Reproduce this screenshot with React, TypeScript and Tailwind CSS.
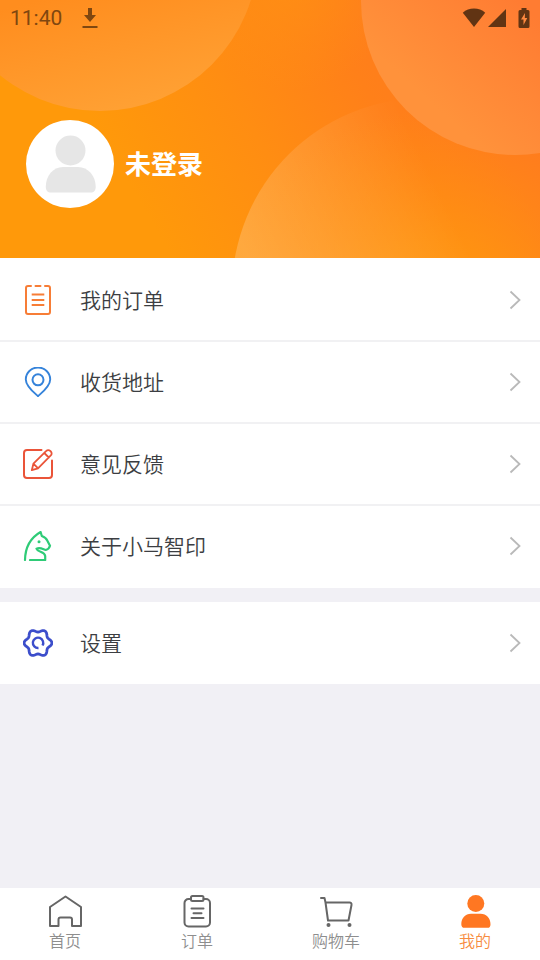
import type { ReactNode } from "react";

const FONT = "font-['Noto_Sans_CJK_SC',sans-serif]";

// Six-lobed outline of the settings gear, centred in a 30x30 box
const GEAR_POINTS = Array.from({ length: 72 }, (_, i) => {
  const angle = (i * 5 * Math.PI) / 180;
  const radius = 12.4 + 1.5 * Math.cos(6 * angle);
  return `${(15 + radius * Math.cos(angle)).toFixed(2)},${(
    15 +
    radius * Math.sin(angle)
  ).toFixed(2)}`;
}).join(" ");

const MenuIcon = ({ color, children }: { color: string; children: ReactNode }) => (
  <svg
    viewBox="0 0 30 30"
    className="size-[30px] shrink-0"
    fill="none"
    stroke={color}
    strokeWidth="2.2"
    strokeLinecap="round"
    strokeLinejoin="round"
    aria-hidden="true"
  >
    {children}
  </svg>
);

const OrderIcon = () => (
  <MenuIcon color="#f77d36">
    <path
      d="M8 1H5a2 2 0 0 0-2 2v24a2 2 0 0 0 2 2h20a2 2 0 0 0 2-2V3a2 2 0 0 0-2-2h-3M12.5 1h5"
      strokeWidth="2"
    />
    <path d="M8.7 9.500h12.600M8.700 15h12.600M8.700 20h12.600" strokeWidth="2" strokeLinecap="butt" />
  </MenuIcon>
);

const AddressIcon = () => (
  <MenuIcon color="#3583da">
    <path
      d="M15 29.200C12 26.400 2.800 19.300 2.800 12.400a12.200 11.900 0 0 1 24.400 0C27.200 19.300 18 26.400 15 29.200Z"
      strokeWidth="1.9"
    />
    <circle cx="15" cy="12.8" r="5.5" strokeWidth="2" />
  </MenuIcon>
);

const FeedbackIcon = () => (
  <MenuIcon color="#ea5439">
    <path d="M18.5 1H4a3 3 0 0 0-3 3v22a3 3 0 0 0 3 3h22a3 3 0 0 0 3-3V11.5" strokeWidth="2" />
    <path
      d="M8.8 21.2l1.6-6.5L23.3 1.9a2.7 2.7 0 0 1 3.9 0l.6.6a2.7 2.7 0 0 1 0 3.900L15 19.300l-6.200 1.900ZM10.600 14.800l4.300 4.400M21.300 4l4.500 4.500"
      strokeWidth="1.8"
    />
  </MenuIcon>
);

const HorseIcon = () => (
  <MenuIcon color="#2fcb77">
    <path d="M2 29C2.200 18.500 5 8.200 17.600 1l1.200 4c3 1.200 4.700 2.600 5.300 4.300L27 14.800c-.6 2.200-2.200 3.700-4.200 4.200-2.400-.5-5.400-3-9.300-1.300 1 3.500 8.300 2.800 8.700 7.300v4H7" />
    <circle cx="16" cy="10.800" r="1.500" fill="#2fcb77" stroke="none" />
  </MenuIcon>
);

const SettingsIcon = () => (
  <MenuIcon color="#3c4ecb">
    <polygon points={GEAR_POINTS} strokeWidth="2.8" />
    <path d="M15.500 20A5.200 5.200 0 1 1 19.500 17.500" strokeWidth="2.400" strokeLinecap="butt" />
  </MenuIcon>
);

const Chevron = () => (
  <svg
    viewBox="0 0 12 20"
    className="h-5 w-3 shrink-0"
    fill="none"
    stroke="#b9b9b9"
    strokeWidth="1.8"
    aria-hidden="true"
  >
    <path d="M1.5 1.5 10.5 10l-9 8.500" />
  </svg>
);

const accountItems = [
  { label: "我的订单", icon: <OrderIcon /> },
  { label: "收货地址", icon: <AddressIcon /> },
  { label: "意见反馈", icon: <FeedbackIcon /> },
  { label: "关于小马智印", icon: <HorseIcon /> },
];

const MenuRow = ({ label, icon }: { label: string; icon: ReactNode }) => (
  <a href="#" className="flex h-20 items-center pr-[19px] pl-[23px]">
    {icon}
    <span className="ml-[27px] flex-1 pb-0.5 text-[21px] leading-8 font-[350] text-[#3c3e42]">
      {label}
    </span>
    <Chevron />
  </a>
);

const StatusBar = () => (
  <div className="flex h-9 items-center px-2.5">
    <span className="font-[Roboto,sans-serif] text-[21px] leading-6 text-[#7f4710]">11:40</span>
    <svg viewBox="0 0 16 22" className="ml-5 h-[22px] w-4" fill="#7f4710" aria-hidden="true">
      <path d="M6 1h4v7h4l-6 7-6-7h4zM.5 19h15v2H.5z" />
    </svg>
    <div className="ml-auto flex items-center text-[#613413]">
      <svg viewBox="0 0 24 20" className="h-5 w-6" fill="currentColor" aria-hidden="true">
        <path d="M12 19 .8 4.800C3.800 2 7.800.6 12 .6s8.200 1.400 11.200 4.200z" />
      </svg>
      <svg viewBox="0 0 18 20" className="ml-0.5 h-5 w-[18px]" fill="currentColor" aria-hidden="true">
        <path d="M18 1v18H0z" />
      </svg>
      <svg viewBox="0 0 12 20" className="ml-3 h-5 w-3" aria-hidden="true">
        <path
          d="M3.500 0h5v2H10a1.500 1.500 0 0 1 1.500 1.500v15A1.500 1.500 0 0 1 10 20H2A1.500 1.500 0 0 1 .5 18.500v-15A1.500 1.500 0 0 1 2 2h1.500z"
          fill="currentColor"
        />
        <path d="M7 5 3 11.500h2.500V17L9.300 10H6.800z" fill="#ff8a40" />
      </svg>
    </div>
  </div>
);

const HeaderBackdrop = () => (
  <svg
    viewBox="0 0 540 258"
    preserveAspectRatio="none"
    className="absolute inset-0 h-full w-full"
    aria-hidden="true"
  >
    <defs>
      <linearGradient id="base" gradientUnits="userSpaceOnUse" x1="150" y1="220" x2="440" y2="50">
        <stop offset="0" stopColor="#ff990a" />
        <stop offset="0.4" stopColor="#ff8d12" />
        <stop offset="0.75" stopColor="#ff8019" />
        <stop offset="1" stopColor="#ff7b1e" />
      </linearGradient>
      <radialGradient id="corner" gradientUnits="userSpaceOnUse" cx="430" cy="330" r="220">
        <stop offset="0" stopColor="#ff9a10" />
        <stop offset="0.4" stopColor="#ff9610" stopOpacity="0.8" />
        <stop offset="1" stopColor="#ff9310" stopOpacity="0" />
      </radialGradient>
      <radialGradient id="top" gradientUnits="userSpaceOnUse" cx="290" cy="-20" r="110">
        <stop offset="0" stopColor="#ff9312" stopOpacity="0.7" />
        <stop offset="1" stopColor="#ff9312" stopOpacity="0" />
      </radialGradient>
      <linearGradient id="left" gradientUnits="userSpaceOnUse" x1="80" y1="-10" x2="110" y2="111">
        <stop offset="0" stopColor="#ff8d1e" />
        <stop offset="1" stopColor="#ffa033" />
      </linearGradient>
      <linearGradient id="right" gradientUnits="userSpaceOnUse" x1="540" y1="20" x2="450" y2="120">
        <stop offset="0" stopColor="#ff7c32" />
        <stop offset="1" stopColor="#ff923b" />
      </linearGradient>
      <linearGradient id="lower" gradientUnits="userSpaceOnUse" x1="250" y1="258" x2="430" y2="170">
        <stop offset="0" stopColor="#fff" stopOpacity="0.2" />
        <stop offset="1" stopColor="#fff" stopOpacity="0" />
      </linearGradient>
    </defs>
    <rect width="540" height="258" fill="url(#base)" />
    <rect width="540" height="258" fill="url(#top)" />
    <rect width="540" height="258" fill="url(#corner)" />
    <circle cx="425" cy="291" r="193" fill="url(#lower)" />
    <circle cx="100" cy="-47" r="158" fill="url(#left)" />
    <circle cx="515" cy="1" r="154" fill="url(#right)" />
  </svg>
);

const Header = () => (
  <header className="relative overflow-hidden pb-[50px]">
    <HeaderBackdrop />
    <div className="relative">
      <StatusBar />
      <button type="button" className="mt-[84px] ml-[26px] flex items-center gap-[11px]">
        <svg viewBox="0 0 88 88" className="size-[88px]" aria-hidden="true">
          <circle cx="44" cy="44" r="44" fill="#fff" />
          <g fill="#e6e6e6">
            <circle cx="44.5" cy="30.5" r="15" />
            <path d="M37 47h15c10 0 17.700 9 17.700 19.500 0 4-1.700 6-5 6H25c-3.500 0-5.200-2-5.200-6C19.800 56 27 47 37 47z" />
          </g>
        </svg>
        <span className="pb-0.5 text-[26px] leading-9 font-bold text-white">未登录</span>
      </button>
    </div>
  </header>
);

const TabIcon = ({ children }: { children: ReactNode }) => (
  <svg
    viewBox="0 0 34 34"
    className="size-[34px]"
    fill="none"
    stroke="#666"
    strokeWidth="2"
    strokeLinejoin="round"
    strokeLinecap="round"
    aria-hidden="true"
  >
    {children}
  </svg>
);

const tabs = [
  {
    label: "首页",
    icon: (
      <TabIcon>
        <path d="M2 13 17.500 2.500 33 13V32h-9v-6.500a2 2 0 0 0-2-2h-9.500a2 2 0 0 0-2 2V32H2z" />
      </TabIcon>
    ),
  },
  {
    label: "订单",
    icon: (
      <TabIcon>
        <path d="M11 5H8.500A4 4 0 0 0 4.500 9v19.500a4 4 0 0 0 4 4h17.500a4 4 0 0 0 4-4V9a4 4 0 0 0-4-4H23.500" />
        <rect x="11" y="2" width="12.5" height="5" rx="1.5" />
        <path d="M11.500 14.500h12M13.500 19.200h8M11.500 24h12" />
      </TabIcon>
    ),
  },
  {
    label: "购物车",
    icon: (
      <TabIcon>
        <path d="M2 4h3.500l1 4.500L9 26.500h20.500l3-15.500a2 2 0 0 0-2-2.500h-24" />
        <circle cx="9.5" cy="31" r="2" fill="#666" stroke="none" />
        <circle cx="30.5" cy="31" r="2" fill="#666" stroke="none" />
      </TabIcon>
    ),
  },
  {
    label: "我的",
    active: true,
    icon: (
      <svg viewBox="0 0 34 34" className="size-[34px]" fill="#ff7722" aria-hidden="true">
        <circle cx="17.8" cy="9.5" r="8.5" />
        <path d="M13 19.700h9.500c6 0 10 4.500 10 10.500 0 2.500-1 3.600-3 3.600H6.500c-2 0-3.200-1.100-3.200-3.600 0-6 4-10.500 9.700-10.500z" />
      </svg>
    ),
  },
];

const TabBar = () => (
  <nav className="flex h-[72px] items-start justify-between bg-white px-12 pt-1.5">
    {tabs.map((tab) => (
      <a
        key={tab.label}
        href="#"
        aria-current={tab.active ? "page" : undefined}
        className="flex flex-col items-center"
      >
        {tab.icon}
        <span
          className={`text-base leading-6 font-[350] ${tab.active ? "text-[#f78c40]" : "text-[#8e8e8e]"}`}
        >
          {tab.label}
        </span>
      </a>
    ))}
  </nav>
);

export default function App() {
  return (
    <div className={`flex min-h-screen flex-col bg-[#f1f0f5] ${FONT}`}>
      <Header />
      <main className="flex-1">
        <div className="divide-y-2 divide-[#f1f1f3] bg-white py-0.5">
          {accountItems.map((item) => (
            <div key={item.label}>
              <MenuRow label={item.label} icon={item.icon} />
            </div>
          ))}
        </div>
        <div className="mt-3.5 bg-white py-px">
          <MenuRow label="设置" icon={<SettingsIcon />} />
        </div>
      </main>
      <TabBar />
    </div>
  );
}
